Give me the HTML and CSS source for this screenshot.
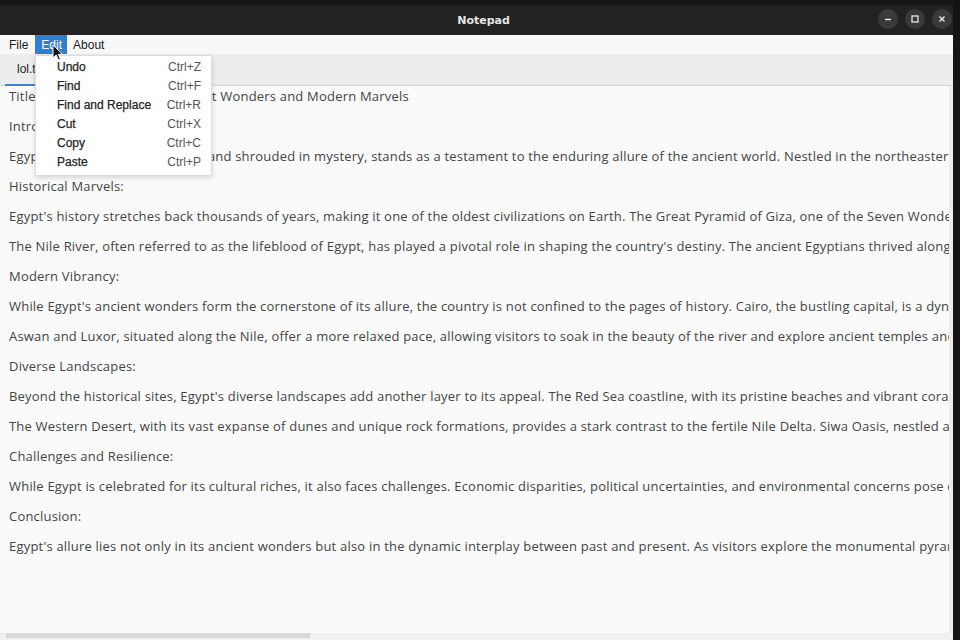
FILE: index.html
```html
<!DOCTYPE html>
<html>
<head>
<meta charset="utf-8">
<title>Notepad</title>
<link rel="stylesheet" href="styles.css">
</head>
<body>
<div class="window">
  <header class="titlebar">
    <div class="title">Notepad</div>
    <div class="controls">
      <span class="ctl"><svg width="10" height="10" viewBox="0 0 10 10"><path d="M2 5.5h6" stroke="#e8e8e8" stroke-width="1.4"/></svg></span>
      <span class="ctl"><svg width="10" height="10" viewBox="0 0 10 10"><rect x="2" y="2" width="6" height="6" fill="none" stroke="#e8e8e8" stroke-width="1.3"/></svg></span>
      <span class="ctl"><svg width="10" height="10" viewBox="0 0 10 10"><path d="M2.5 2.5l5 5M7.5 2.5l-5 5" stroke="#e8e8e8" stroke-width="1.4"/></svg></span>
    </div>
  </header>
  <nav class="menubar">
    <span class="mitem">File</span>
    <span class="mitem active">Edit</span>
    <span class="mitem">About</span>
  </nav>
  <div class="tabbar">
    <div class="tab">lol.txt</div>
  </div>
  <main class="editor">
    <div class="lines">
      <p>Title: Egypt: The Realm of Ancient Wonders and Modern Marvels</p>
      <p>Introduction:</p>
      <p>Egypt, a land steeped in history and shrouded in mystery, stands as a testament to the enduring allure of the ancient world. Nestled in the northeastern corner of Africa, this captivating country offers a unique blend of ancient wonders and modern marvels.</p>
      <p>Historical Marvels:</p>
      <p>Egypt's history stretches back thousands of years, making it one of the oldest civilizations on Earth. The Great Pyramid of Giza, one of the Seven Wonders of the Ancient World, stands as a symbol of the ingenuity of the ancient Egyptians.</p>
      <p>The Nile River, often referred to as the lifeblood of Egypt, has played a pivotal role in shaping the country's destiny. The ancient Egyptians thrived along the fertile banks of the Nile.</p>
      <p>Modern Vibrancy:</p>
      <p>While Egypt's ancient wonders form the cornerstone of its allure, the country is not confined to the pages of history. Cairo, the bustling capital, is a dynamic metropolis.</p>
      <p>Aswan and Luxor, situated along the Nile, offer a more relaxed pace, allowing visitors to soak in the beauty of the river and explore ancient temples and tombs.</p>
      <p>Diverse Landscapes:</p>
      <p>Beyond the historical sites, Egypt's diverse landscapes add another layer to its appeal. The Red Sea coastline, with its pristine beaches and vibrant coral reefs, is a paradise for divers.</p>
      <p>The Western Desert, with its vast expanse of dunes and unique rock formations, provides a stark contrast to the fertile Nile Delta. Siwa Oasis, nestled amid the sands, is a hidden gem.</p>
      <p>Challenges and Resilience:</p>
      <p>While Egypt is celebrated for its cultural riches, it also faces challenges. Economic disparities, political uncertainties, and environmental concerns pose ongoing challenges.</p>
      <p>Conclusion:</p>
      <p>Egypt's allure lies not only in its ancient wonders but also in the dynamic interplay between past and present. As visitors explore the monumental pyramids and bustling bazaars.</p>
    </div>
    <div class="vscroll"></div>
  </main>
  <div class="hscroll"><div class="thumb"></div></div>

  <div class="dropdown">
    <div class="ditem"><span class="lbl">Undo</span><span class="key">Ctrl+Z</span></div>
    <div class="ditem"><span class="lbl">Find</span><span class="key">Ctrl+F</span></div>
    <div class="ditem"><span class="lbl">Find and Replace</span><span class="key">Ctrl+R</span></div>
    <div class="ditem"><span class="lbl">Cut</span><span class="key">Ctrl+X</span></div>
    <div class="ditem"><span class="lbl">Copy</span><span class="key">Ctrl+C</span></div>
    <div class="ditem"><span class="lbl">Paste</span><span class="key">Ctrl+P</span></div>
  </div>
  <svg class="cursor" width="12" height="18" viewBox="0 0 12 18"><path d="M1 1v13l3.2-3 2.3 5.2 2-0.9-2.2-5h4.4z" fill="#111" stroke="#fff" stroke-width="1"/></svg>
</div>
</body>
</html>
```
FILE: styles.css
```css
html, body {
  margin: 0;
  padding: 0;
  width: 960px;
  height: 640px;
  overflow: hidden;
  background: #141414;
}
.window {
  position: relative;
  width: 953px;
  height: 640px;
  display: flex;
  flex-direction: column;
  background: #fafafa;
  font-family: "Liberation Sans", Arial, sans-serif;
}
.titlebar {
  height: 35px;
  flex: none;
  background: #222222;
  border-top: 5px solid #161616;
  box-sizing: border-box;
  display: flex;
  align-items: center;
  justify-content: center;
  position: relative;
}
.title {
  color: #e6e6e6;
  font-family: "DejaVu Sans", sans-serif;
  font-weight: bold;
  font-size: 11px;
  margin-left: 14px;
}
.controls {
  position: absolute;
  right: 1px;
  top: 4px;
  display: flex;
  gap: 7px;
}
.ctl {
  width: 20px;
  height: 20px;
  border-radius: 50%;
  background: #3a3a3a;
  display: flex;
  align-items: center;
  justify-content: center;
}
.menubar {
  height: 19px;
  flex: none;
  display: flex;
  align-items: stretch;
  padding-left: 3px;
  background: #f8f8f8;
  font-size: 12px;
  color: #1a1a1a;
}
.mitem {
  padding: 0 6px;
  display: flex;
  align-items: center;
}
.mitem.active {
  background: #2f7fd0;
  color: #fff;
  margin-left: 1px;
  padding-right: 5px;
}
.tabbar {
  height: 32px;
  flex: none;
  background: #ededed;
  border-bottom: 1px solid #cdd6df;
  box-sizing: border-box;
  padding-left: 5px;
  display: flex;
}
.tab {
  padding: 0 12px;
  font-size: 12px;
  color: #222;
  display: flex;
  align-items: center;
  border-bottom: 2px solid #3a86d4;
  margin-bottom: -1px;
}
.editor {
  flex: 1;
  display: flex;
  min-height: 0;
  background: #fafafa;
}
.lines {
  flex: 1;
  overflow: hidden;
  padding: 1px 0 0 9px;
  font-family: "Open Sans", sans-serif;
  font-size: 13px;
  letter-spacing: 0.2px;
  color: #444;
}
.lines p {
  margin: 0;
  height: 30px;
  line-height: 18px;
  white-space: nowrap;
  overflow: hidden;
}
.vscroll {
  width: 4px;
  background: #ececec;
}
.hscroll {
  height: 7px;
  flex: none;
  background: #f0f0f0;
  padding-left: 6px;
}
.thumb {
  width: 304px;
  height: 5px;
  background: #d9d9d9;
}
.dropdown {
  position: absolute;
  left: 35px;
  top: 55px;
  width: 177px;
  box-sizing: border-box;
  padding: 1px 0 4px;
  background: #ffffff;
  border: 1px solid #dcdcdc;
  box-shadow: 0 2px 5px rgba(0,0,0,0.15);
  font-size: 12px;
}
.ditem {
  height: 19px;
  display: flex;
  align-items: center;
  justify-content: space-between;
  padding: 0 10px 0 21px;
}
.lbl {
  color: #222;
  -webkit-text-stroke: 0.25px #222;
}
.key {
  color: #555;
}
.cursor {
  position: absolute;
  left: 52px;
  top: 44px;
}
```
